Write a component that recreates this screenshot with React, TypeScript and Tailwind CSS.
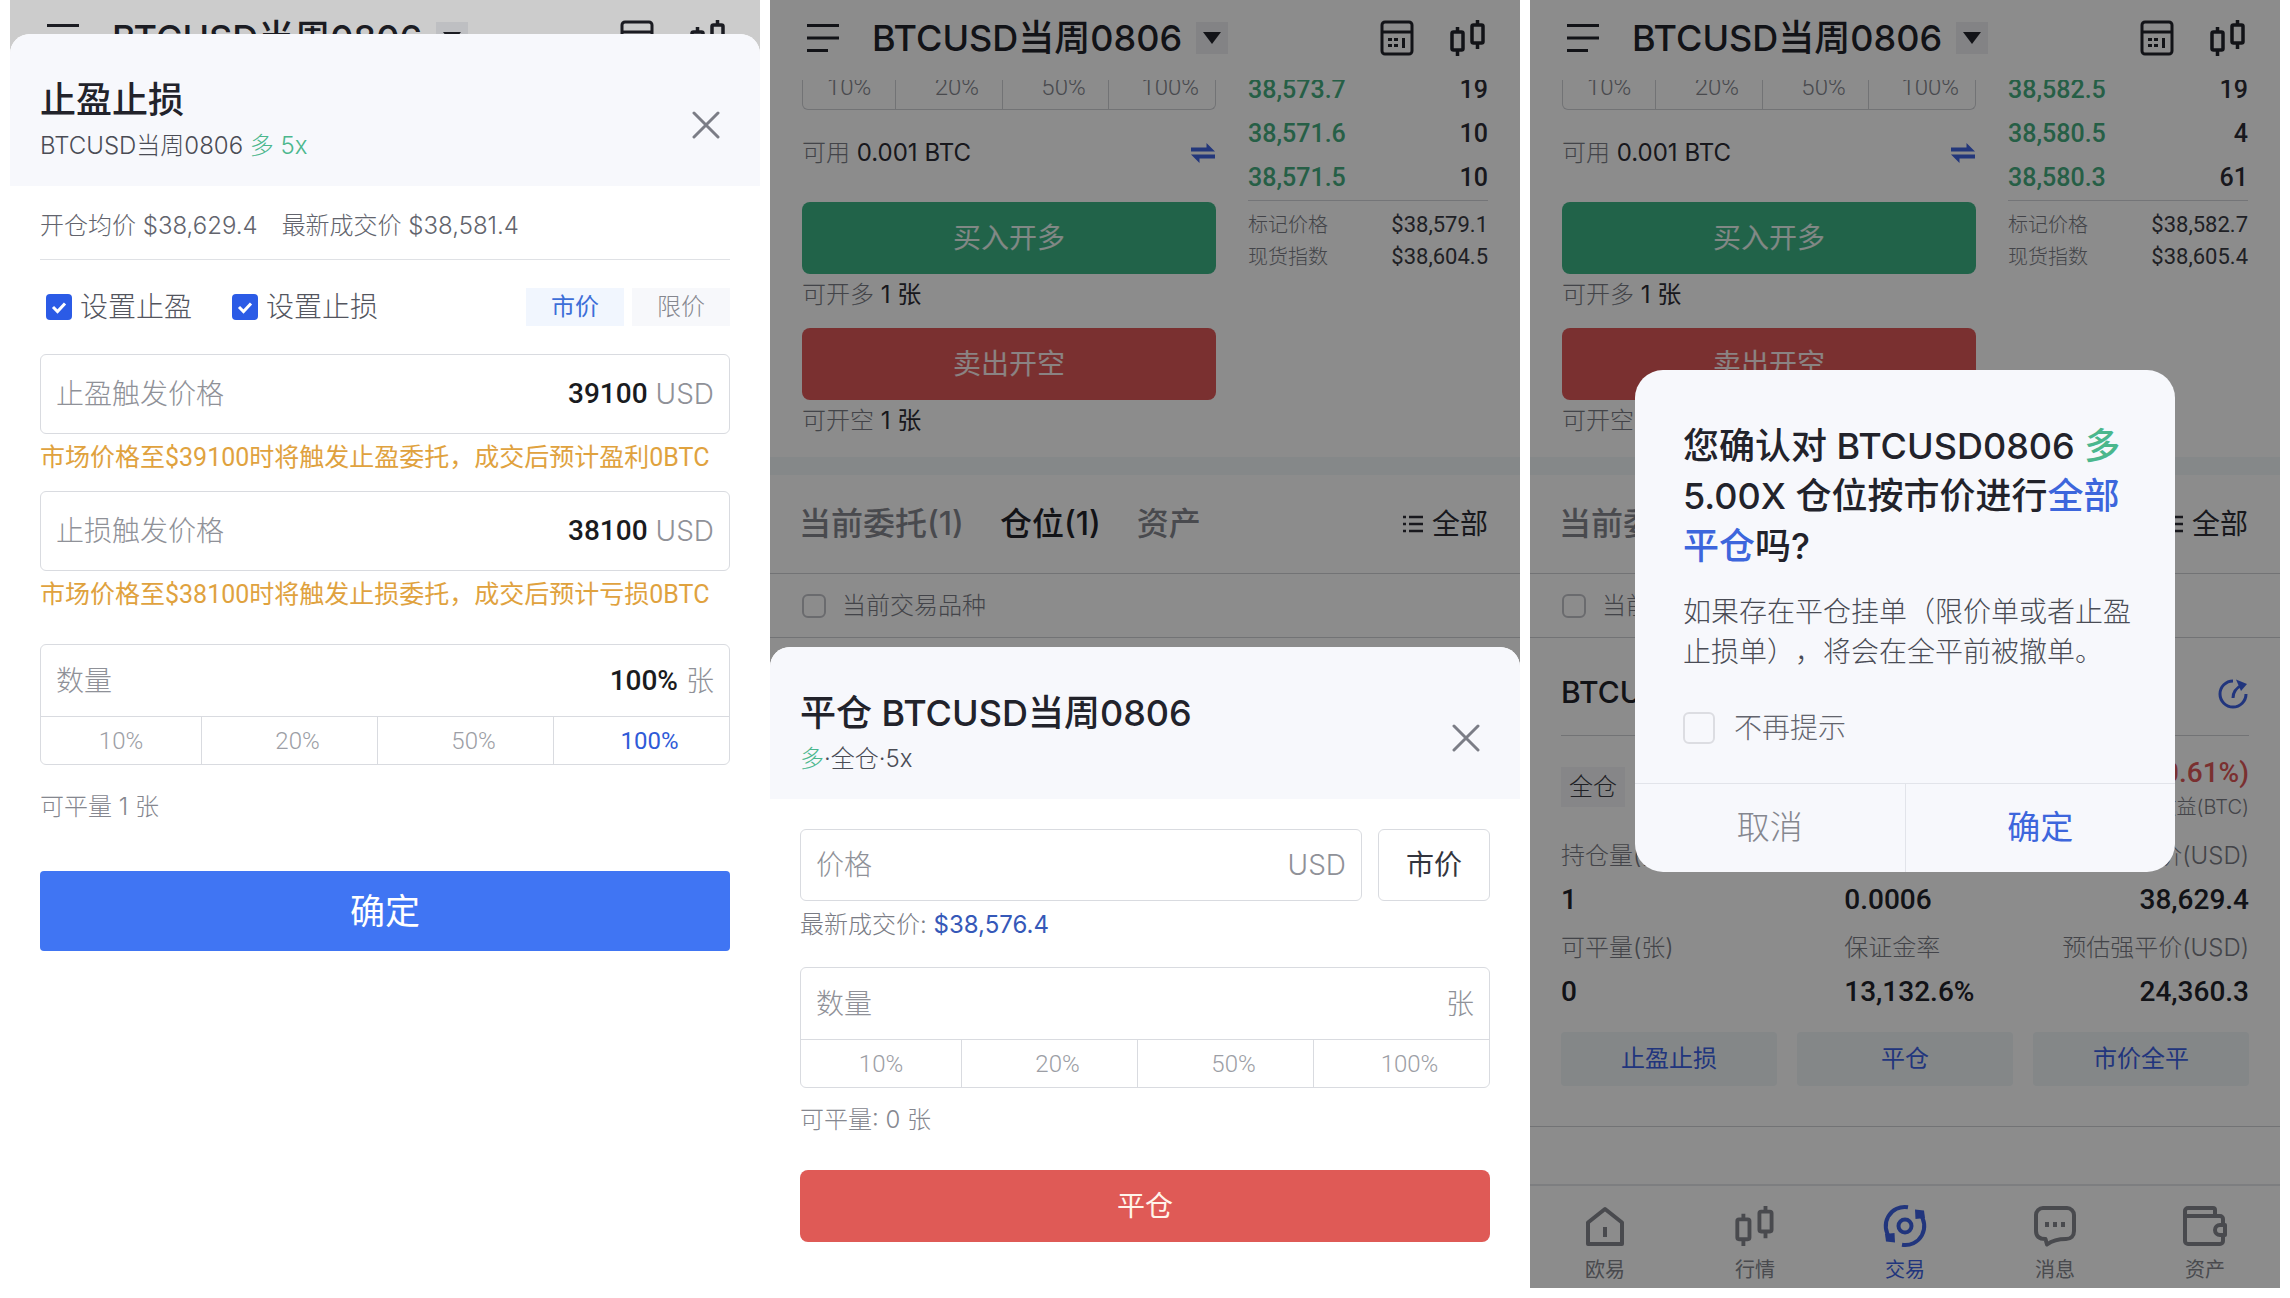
import React from "react";

const SANS = "font-['Inter','Noto_Sans_CJK_SC',sans-serif]";
const NUM = "font-['Roboto','Noto_Sans_CJK_SC',sans-serif]";

/* ---------- icons ---------- */

function CandlesIcon({ className }: { className: string }) {
  return (
    <svg viewBox="0 0 36 38" className={className} fill="none" stroke="currentColor" strokeWidth="3.5" aria-hidden="true">
      <rect x="2" y="13" width="11" height="18" rx="1.5" />
      <path d="M7.5 8v5M7.500 31v6" />
      <rect x="22" y="6" width="11" height="18" rx="1.5" />
      <path d="M27.5 1v5M27.500 24v6" />
    </svg>
  );
}

function CalculatorIcon() {
  return (
    <svg viewBox="0 0 34 36" className="h-9 w-[34px]" fill="none" stroke="currentColor" strokeWidth="3" aria-hidden="true">
      <rect x="2" y="2" width="30" height="32" rx="3" />
      <path d="M2 12h30" />
      <g fill="currentColor" stroke="none">
        <rect x="8" y="18" width="4" height="3" />
        <rect x="14" y="18" width="4" height="3" />
        <rect x="8" y="24" width="4" height="3" />
        <rect x="14" y="24" width="4" height="3" />
        <rect x="22" y="18" width="3" height="10" />
      </g>
    </svg>
  );
}

function MenuIcon() {
  return (
    <svg viewBox="0 0 34 30" className="h-[30px] w-[34px]" stroke="currentColor" strokeWidth="3" aria-hidden="true">
      <path d="M1 2.5h32M1 15h32M1 27.5h21" />
    </svg>
  );
}

function CloseIcon() {
  return (
    <svg viewBox="0 0 28 28" className="size-7" stroke="currentColor" strokeWidth="3" strokeLinecap="round" aria-hidden="true">
      <path d="M2 2l24 24M26 2L2 26" />
    </svg>
  );
}

function SwapIcon() {
  return (
    <svg viewBox="0 0 26 22" className="h-[22px] w-[26px]" fill="currentColor" aria-hidden="true">
      <path d="M1 5.500h15.500V1l8.500 8.500H1zM25 12.500H1l8.500 8.500v-4.500H25z" />
    </svg>
  );
}

function ListIcon() {
  return (
    <svg viewBox="0 0 22 18" className="h-[18px] w-[22px]" stroke="currentColor" strokeWidth="2.5" aria-hidden="true">
      <path d="M1 2h3M7 2h14M1 9h3M7 9h14M1 16h3M7 16h14" />
    </svg>
  );
}

function ShareIcon() {
  return (
    <svg viewBox="0 0 32 32" className="size-8" fill="none" stroke="currentColor" strokeWidth="3" aria-hidden="true">
      <path d="M16 4A13 13 0 1 0 29 17" />
      <path d="M16 21c0-6 3-10 9-13" />
      <path d="M19 2.500l11 4.500-6 7z" fill="currentColor" stroke="none" />
    </svg>
  );
}

function HomeIcon() {
  return (
    <svg viewBox="0 0 42 42" className="size-[42px]" fill="none" stroke="currentColor" strokeWidth="4" strokeLinejoin="round" aria-hidden="true">
      <path d="M21 4L38 17.500V39H4V17.500z" />
      <path d="M21 22v10" />
    </svg>
  );
}

function TradeIcon() {
  return (
    <svg viewBox="0 0 44 44" className="size-[44px]" fill="none" stroke="currentColor" strokeWidth="4" aria-hidden="true">
      <circle cx="22" cy="22" r="6.500" />
      <path d="M25 3.200A19 19 0 0 0 7.500 34.500" />
      <path d="M19 40.800A19 19 0 0 0 36.500 9.500" />
      <g fill="currentColor" stroke="none">
        <path d="M2 30l9.500-1 .5 9.500-9-1z" />
        <path d="M42 14l-9.500 1-.5-9.500 9 1z" />
      </g>
    </svg>
  );
}

function MessageIcon() {
  return (
    <svg viewBox="0 0 44 42" className="h-[42px] w-[44px]" fill="none" stroke="currentColor" strokeWidth="4" strokeLinejoin="round" aria-hidden="true">
      <path d="M10 3h24a7 7 0 0 1 7 7v16c0 5-3 8-8 8-8 0-13 1-19 5.500L12.500 34C6 34 3 31 3 26V10a7 7 0 0 1 7-7z" />
      <g fill="currentColor" stroke="none">
        <rect x="12" y="17" width="4" height="5" />
        <rect x="20" y="17" width="4" height="5" />
        <rect x="28" y="17" width="4" height="5" />
      </g>
    </svg>
  );
}

function WalletIcon() {
  return (
    <svg viewBox="0 0 46 42" className="h-[42px] w-[46px]" fill="none" stroke="currentColor" strokeWidth="4" strokeLinejoin="round" aria-hidden="true">
      <path d="M33 11V5a2 2 0 0 0-2-2H6a3 3 0 0 0-3 3v30a3 3 0 0 0 3 3h32a3 3 0 0 0 3-3v-5" />
      <path d="M3 11h35a3 3 0 0 1 3 3v5" />
      <path d="M43 20h-5a5 5 0 0 0 0 10h5z" />
    </svg>
  );
}

/* ---------- shared pieces ---------- */

function TopBar() {
  return (
    <header className="flex h-20 items-start pl-9 pr-[34px] pt-5 text-[#22232b]">
      <button type="button" aria-label="菜单" className="flex h-9 items-center">
        <MenuIcon />
      </button>
      <button type="button" className="ml-8 flex h-9 items-center gap-3.5">
        <span className="text-4xl font-medium leading-9">BTCUSD当周0806</span>
        <span className="flex h-8 w-8 items-center justify-center bg-[#eeeff3]">
          <svg viewBox="0 0 18 12" className="h-3 w-[18px]" fill="currentColor" aria-hidden="true">
            <path d="M0 0h18L9 12z" />
          </svg>
        </span>
      </button>
      <div className="ml-auto flex h-9 items-center gap-9">
        <button type="button" aria-label="计算器">
          <CalculatorIcon />
        </button>
        <button type="button" aria-label="行情图">
          <CandlesIcon className="h-[38px] w-9" />
        </button>
      </div>
    </header>
  );
}

function PercentRow({ selected }: { selected?: string }) {
  return (
    <div className={`flex h-12 border-t border-[#d9dbe0] text-2xl font-light ${NUM}`}>
      <button type="button" className="w-40 text-[#9c9ea5]">10%</button>
      {["20%", "50%", "100%"].map((p) => (
        <button
          key={p}
          type="button"
          className={`flex-1 border-l border-[#d9dbe0] pl-4 ${p === selected ? "font-normal text-[#2f5bd8]" : "text-[#9c9ea5]"}`}
        >
          {p}
        </button>
      ))}
    </div>
  );
}

function QuantityBox({ id, value, selected }: { id: string; value?: string; selected?: string }) {
  return (
    <div className="rounded-md border border-[#d9dbe0]">
      <div className="flex h-[71px] items-center px-[15px] text-[28px] font-light text-[#8f9198]">
        <label htmlFor={id}>数量</label>
        <input id={id} defaultValue={value} className={`min-w-0 flex-1 bg-transparent text-right font-medium text-[#1a1b20] outline-none ${NUM}`} />
        <span className="ml-2">张</span>
      </div>
      <PercentRow selected={selected} />
    </div>
  );
}

function SheetHeader({ title, children }: { title: string; children: React.ReactNode }) {
  return (
    <div className="flex items-center rounded-t-[20px] bg-[#f7f8fc] px-[30px] pb-5 pt-10">
      <div className="flex-1">
        <h2 className="text-4xl font-medium leading-[52px] text-[#22232b]">{title}</h2>
        <p className="text-2xl font-light leading-10 text-[#4a4c55]">{children}</p>
      </div>
      <button type="button" aria-label="关闭" className="mr-2.5 mt-2.5 text-[#7b7d86]">
        <CloseIcon />
      </button>
    </div>
  );
}

function TriggerField({ id, label, value, hint }: { id: string; label: string; value: string; hint: string }) {
  return (
    <div>
      <div className="flex h-20 items-center rounded-md border border-[#d9dbe0] px-[15px] text-[28px] font-light text-[#8f9198]">
        <label htmlFor={id}>{label}</label>
        <input id={id} defaultValue={value} className={`min-w-0 flex-1 bg-transparent text-right font-medium text-[#1a1b20] outline-none ${NUM}`} />
        <span className="ml-2">USD</span>
      </div>
      <p className={`h-[57px] whitespace-nowrap pt-1 text-[25px] leading-10 text-[#e0a23e] ${NUM}`}>{hint}</p>
    </div>
  );
}

type Quote = { rows: [string, string][]; mark: string; index: string };

function TradePage({ quote, id, children }: { quote: Quote; id: string; children?: React.ReactNode }) {
  return (
    <div className="flex h-full flex-col bg-white">
      <TopBar />
      <div className="flex gap-8 overflow-hidden px-8">
        <div className="w-[414px]">
          <div className={`flex h-[30px] items-end overflow-hidden rounded-b-md border border-t-0 border-[#cfd1d6] text-2xl font-light text-[#85878f] ${NUM}`}>
            <button type="button" className="h-11 w-[92px]">10%</button>
            {["20%", "50%", "100%"].map((p) => (
              <button key={p} type="button" className="h-11 flex-1 border-l border-[#cfd1d6] pl-4">{p}</button>
            ))}
          </div>
          <div className="flex h-[92px] items-center justify-between pb-1.5 text-2xl font-light text-[#7a7c85]">
            <span>可用 <span className="font-normal text-[#2c2d35]">0.001 BTC</span></span>
            <button type="button" aria-label="划转" className="text-[#4064e0]"><SwapIcon /></button>
          </div>
          <button type="button" className="h-[72px] w-full rounded-lg bg-[#3cb486] text-[28px] text-white/90">买入开多</button>
          <p className="h-[54px] text-2xl font-light leading-[42px] text-[#7a7c85]">可开多 <span className="font-normal text-[#2c2d35]">1 张</span></p>
          <button type="button" className="h-[72px] w-full rounded-lg bg-[#df5858] text-[28px] text-white/90">卖出开空</button>
          <p className="h-[57px] text-2xl font-light leading-[42px] text-[#7a7c85]">可开空 <span className="font-normal text-[#2c2d35]">1 张</span></p>
        </div>
        <div className="min-w-0 flex-1">
          <div className={`-mt-3 border-b border-[#d4d6da] text-[25px] font-medium leading-[44px] ${NUM}`}>
            {quote.rows.map(([price, size]) => (
              <div key={price} className="flex justify-between">
                <span className="text-[#45ad80]">{price}</span>
                <span className="text-[#2c2d35]">{size}</span>
              </div>
            ))}
          </div>
          <dl className="pt-2 text-xl font-light leading-8 text-[#7a7c85]">
            <div className="flex justify-between"><dt>标记价格</dt><dd className={`text-[22px] font-normal text-[#3a3b44] ${NUM}`}>{quote.mark}</dd></div>
            <div className="flex justify-between"><dt>现货指数</dt><dd className={`text-[22px] font-normal text-[#3a3b44] ${NUM}`}>{quote.index}</dd></div>
          </dl>
        </div>
      </div>
      <div className="h-[18px] shrink-0 bg-[#f3f7f9]" />
      <nav className="flex h-[99px] shrink-0 items-center gap-9 border-b border-[#cfd1d6] pl-[29px] pr-8 text-[32px] font-medium text-[#85878f]">
        <button type="button">当前委托(1)</button>
        <button type="button" className="text-[#22232b]">仓位(1)</button>
        <button type="button">资产</button>
        <button type="button" className="ml-auto flex items-center gap-2 text-[28px] font-normal text-[#2c2d35]"><ListIcon />全部</button>
      </nav>
      <div className="flex h-16 shrink-0 items-center gap-4 border-b border-[#cfd1d6] px-8 text-2xl font-light text-[#7a7c85]">
        <input id={id} type="checkbox" className="size-6 appearance-none rounded-md border-2 border-[#c2c3c9]" />
        <label htmlFor={id}>当前交易品种</label>
      </div>
      {children}
    </div>
  );
}

/* ---------- stop-profit / stop-loss ---------- */

function Check() {
  return (
    <span className="relative flex size-[26px]">
      <input type="checkbox" defaultChecked className="size-[26px] appearance-none rounded bg-[#c9cbd1] checked:bg-[#2b5be6]" />
      <svg viewBox="0 0 26 26" className="pointer-events-none absolute inset-0 size-[26px]" fill="none" stroke="#fff" strokeWidth="3" aria-hidden="true">
        <path d="M7 13l4.500 4.500L19 9.500" />
      </svg>
    </span>
  );
}

function StopScreen() {
  return (
    <section className="relative min-w-0 overflow-hidden bg-white">
      <TopBar />
      <div className="absolute inset-x-0 top-0 h-20 bg-black/20" />
      <div className="absolute inset-x-0 bottom-0 top-[34px] rounded-t-[20px] bg-white">
        <SheetHeader title="止盈止损">
          BTCUSD当周0806 <span className="text-[#4bb78d]">多 5x</span>
        </SheetHeader>
        <div className="px-[30px]">
          <div className="flex h-[74px] items-center gap-6 border-b border-[#dfe1e5] pt-1.5 text-2xl font-light text-[#62646d]">
            <span>开仓均价 $38,629.4</span>
            <span>最新成交价 $38,581.4</span>
          </div>
          <div className="flex h-[94px] items-center text-[28px] font-light text-[#53555e]">
            <label className="ml-1.5 flex items-center gap-2"><Check />设置止盈</label>
            <label className="ml-10 flex items-center gap-2"><Check />设置止损</label>
            <div className="ml-auto flex gap-2 text-2xl">
              <button type="button" className="h-[38px] w-[98px] bg-[#f1f6fe] font-normal text-[#3d6ed8]">市价</button>
              <button type="button" className="h-[38px] w-[98px] bg-[#f7f8fb] text-[#85878f]">限价</button>
            </div>
          </div>
          <TriggerField id="tp" label="止盈触发价格" value="39100" hint="市场价格至$39100时将触发止盈委托，成交后预计盈利0BTC" />
          <TriggerField id="sl" label="止损触发价格" value="38100" hint="市场价格至$38100时将触发止损委托，成交后预计亏损0BTC" />
          <div className="pt-4">
            <QuantityBox id="qty1" value="100%" selected="100%" />
          </div>
          <p className="h-[106px] pt-[22px] text-2xl font-light leading-10 text-[#85878f]">可平量 1 张</p>
          <button type="button" className="h-20 w-full rounded bg-[#4075f3] text-[35px] text-white">确定</button>
        </div>
      </div>
    </section>
  );
}

/* ---------- close position ---------- */

function CloseScreen() {
  return (
    <section className="relative min-w-0 overflow-hidden">
      <TradePage
        id="cur2"
        quote={{ rows: [["38,573.7", "19"], ["38,571.6", "10"], ["38,571.5", "10"]], mark: "$38,579.1", index: "$38,604.5" }}
      />
      <div className="absolute inset-0 bg-black/45" />
      <div className="absolute inset-x-0 bottom-0 rounded-t-[20px] bg-white">
        <SheetHeader title="平仓 BTCUSD当周0806">
          <span className="text-[#4bb78d]">多</span>·全仓·5x
        </SheetHeader>
        <div className="px-[30px] pb-[46px] pt-[30px]">
          <div className="flex gap-4">
            <div className="flex h-[72px] flex-1 items-center rounded-md border border-[#d9dbe0] px-[15px] text-[28px] font-light text-[#8f9198]">
              <label htmlFor="price">价格</label>
              <input id="price" className="min-w-0 flex-1 bg-transparent text-right text-[#1a1b20] outline-none" />
              <span>USD</span>
            </div>
            <button type="button" className="w-28 rounded-md border border-[#d9dbe0] text-[28px] text-[#33353e]">市价</button>
          </div>
          <p className="h-[66px] pt-1 text-2xl font-light leading-10 text-[#7a7c85]">
            最新成交价: <span className="font-normal text-[#3558b8]">$38,576.4</span>
          </p>
          <QuantityBox id="qty2" />
          <p className="h-[82px] pt-3 text-2xl font-light leading-10 text-[#85878f]">可平量: 0 张</p>
          <button type="button" className="h-[72px] w-full rounded-lg bg-[#df5a56] text-[28px] text-[#fff4ea]">平仓</button>
        </div>
      </div>
    </section>
  );
}

/* ---------- market close confirmation ---------- */

function Stat({ label, value, right }: { label: string; value: string; right?: boolean }) {
  return (
    <div className={`whitespace-nowrap pb-1 ${right ? "text-right" : ""}`}>
      <dt className="text-2xl font-light leading-[48px] text-[#7a7c85]">{label}</dt>
      <dd className={`text-[28px] font-medium leading-10 text-[#22232b] ${NUM}`}>{value}</dd>
    </div>
  );
}

function NavItem({ icon, label, active }: { icon: React.ReactNode; label: string; active?: boolean }) {
  return (
    <a href="#" className={`flex flex-1 flex-col items-center text-xl leading-7 ${active ? "text-[#3d62e4]" : "text-[#85878f]"}`}>
      <span className="flex h-11 items-center">{icon}</span>
      <span className="mt-2">{label}</span>
    </a>
  );
}

function ConfirmScreen() {
  return (
    <section className="relative min-w-0 overflow-hidden">
      <TradePage
        id="cur3"
        quote={{ rows: [["38,582.5", "19"], ["38,580.5", "4"], ["38,580.3", "61"]], mark: "$38,582.7", index: "$38,605.4" }}
      >
        <div className="px-[31px]">
          <div className="flex h-[98px] items-center justify-between border-b border-[#cfd1d6] pt-3">
            <h3 className="text-[30px] font-medium text-[#22232b]">BTCUSD当周0806</h3>
            <button type="button" aria-label="分享" className="text-[#3d62e4]"><ShareIcon /></button>
          </div>
          <div className="flex h-24 items-center justify-between pt-1.5">
            <span className="bg-[#f4f5f8] px-2 text-2xl font-light leading-10 text-[#3a3b44]">全仓</span>
            <div className="pt-1 text-right">
              <div className={`text-[28px] font-medium leading-9 text-[#df5858] ${NUM}`}>(-0.61%)</div>
              <div className="text-xl font-light leading-8 text-[#7a7c85]">收益(BTC)</div>
            </div>
          </div>
          <dl className="grid grid-cols-[7fr_5fr_5fr]">
            <Stat label="持仓量(张)" value="1" />
            <Stat label="保证金" value="0.0006" />
            <Stat label="开仓均价(USD)" value="38,629.4" right />
            <Stat label="可平量(张)" value="0" />
            <Stat label="保证金率" value="13,132.6%" />
            <Stat label="预估强平价(USD)" value="24,360.3" right />
          </dl>
          <div className="grid grid-cols-3 gap-5 pt-4 text-2xl text-[#3d62e4]">
            <button type="button" className="h-[54px] rounded bg-[#f0f6f8]">止盈止损</button>
            <button type="button" className="h-[54px] rounded bg-[#f0f6f8]">平仓</button>
            <button type="button" className="h-[54px] rounded bg-[#f0f6f8]">市价全平</button>
          </div>
        </div>
        <div className="mt-10 border-t border-[#cfd1d6]" />
        <nav className="mt-auto flex h-[104px] border-t-2 border-[#e4e6ea] pt-[18px]">
          <NavItem icon={<HomeIcon />} label="欧易" />
          <NavItem icon={<CandlesIcon className="h-[42px] w-10" />} label="行情" />
          <NavItem icon={<TradeIcon />} label="交易" active />
          <NavItem icon={<MessageIcon />} label="消息" />
          <NavItem icon={<WalletIcon />} label="资产" />
        </nav>
      </TradePage>
      <div className="absolute inset-0 bg-black/45" />
      <div role="dialog" aria-label="平仓确认" className="absolute inset-x-[105px] top-[370px] rounded-[28px] bg-[#f7f8fc]">
        <div className="pl-12 pr-11 pt-[51px]">
          <h2 className="text-4xl font-medium leading-[50px] text-[#22232b]">
            您确认对 BTCUSD0806 <span className="text-[#4bb78d]">多</span> 5.00X 仓位按市价进行<span className="text-[#3d66dc]">全部平仓</span>吗?
          </h2>
          <p className="mt-[21px] text-[28px] font-light leading-10 text-[#4a4c55] [text-spacing-trim:space-all]">
            如果存在平仓挂单（限价单或者止盈止损单），将会在全平前被撤单。
          </p>
          <label className="mt-8 flex h-12 items-center gap-[19px] text-[28px] font-light text-[#62646d]">
            <input type="checkbox" className="size-8 appearance-none rounded-md border-2 border-[#dcdde2]" />
            不再提示
          </label>
        </div>
        <div className="mt-[31px] flex h-[89px] border-t border-[#e2e4ea] text-[33px]">
          <button type="button" className="flex-1 font-light text-[#85878f]">取消</button>
          <button type="button" className="flex-1 border-l border-[#e2e4ea] text-[#3d66dc]">确定</button>
        </div>
      </div>
    </section>
  );
}

export default function App() {
  return (
    <main lang="zh-CN" className={`grid min-h-screen grid-cols-3 gap-2.5 bg-white px-2.5 pb-2.5 ${SANS}`}>
      <StopScreen />
      <CloseScreen />
      <ConfirmScreen />
    </main>
  );
}
